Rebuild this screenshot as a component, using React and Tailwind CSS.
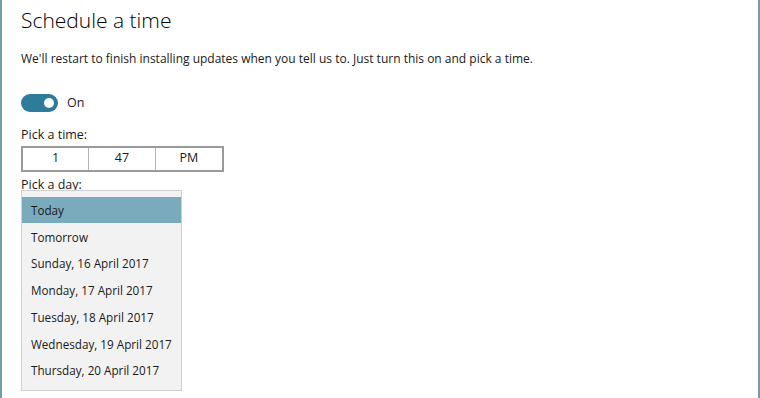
import React from "react";

const days = [
  "Today",
  "Tomorrow",
  "Sunday, 16 April 2017",
  "Monday, 17 April 2017",
  "Tuesday, 18 April 2017",
  "Wednesday, 19 April 2017",
  "Thursday, 20 April 2017",
];

export default function App() {
  return (
    <div
      className="w-[760px] h-[398px] bg-white border-l-2 border-r-2 border-[#6f9db0] overflow-hidden text-[#1a1a1a]"
      style={{ fontFamily: '"Open Sans", "Noto Sans", sans-serif' }}
    >
      <div className="pl-[19px] pt-[6px]">
        <h1 className="text-[21px] font-light leading-[28px] text-black">Schedule a time</h1>
        <p className="mt-[16px] text-[12px] leading-[18px] whitespace-nowrap">
          We'll restart to finish installing updates when you tell us to. Just turn this on and pick a time.
        </p>

        <div className="mt-[26px] flex items-center gap-[9px]">
          <div className="w-[37px] h-[18px] rounded-full bg-[#2d7d9a] flex items-center justify-end pr-[4px]">
            <div className="w-[10px] h-[10px] rounded-full bg-white" />
          </div>
          <span className="text-[12.5px]">On</span>
        </div>

        <div className="mt-[13px] text-[12.5px] leading-[18px]">Pick a time:</div>
        <div className="mt-[2px] w-[203px] h-[26px] grid grid-cols-3 border-2 border-[#9a9a9a] text-[12.5px]">
          <div className="flex items-center justify-center border-r border-[#b5b5b5]">1</div>
          <div className="flex items-center justify-center border-r border-[#b5b5b5]">47</div>
          <div className="flex items-center justify-center">PM</div>
        </div>

        <div className="relative mt-[4px] h-[18px] text-[12.5px] leading-[18px]">
          Pick a day:
          <div className="absolute left-0 top-[14px] w-[161px] bg-[#f2f2f2] border border-[#cfcfcf] pt-[6px] pb-[6px] z-10">
            {days.map((d, i) => (
              <div
                key={d}
                className={`h-[26.7px] flex items-center pl-[9px] text-[11.7px] whitespace-nowrap ${
                  i === 0 ? "bg-[#7aabbd]" : ""
                }`}
              >
                {d}
              </div>
            ))}
          </div>
        </div>
      </div>
    </div>
  );
}
